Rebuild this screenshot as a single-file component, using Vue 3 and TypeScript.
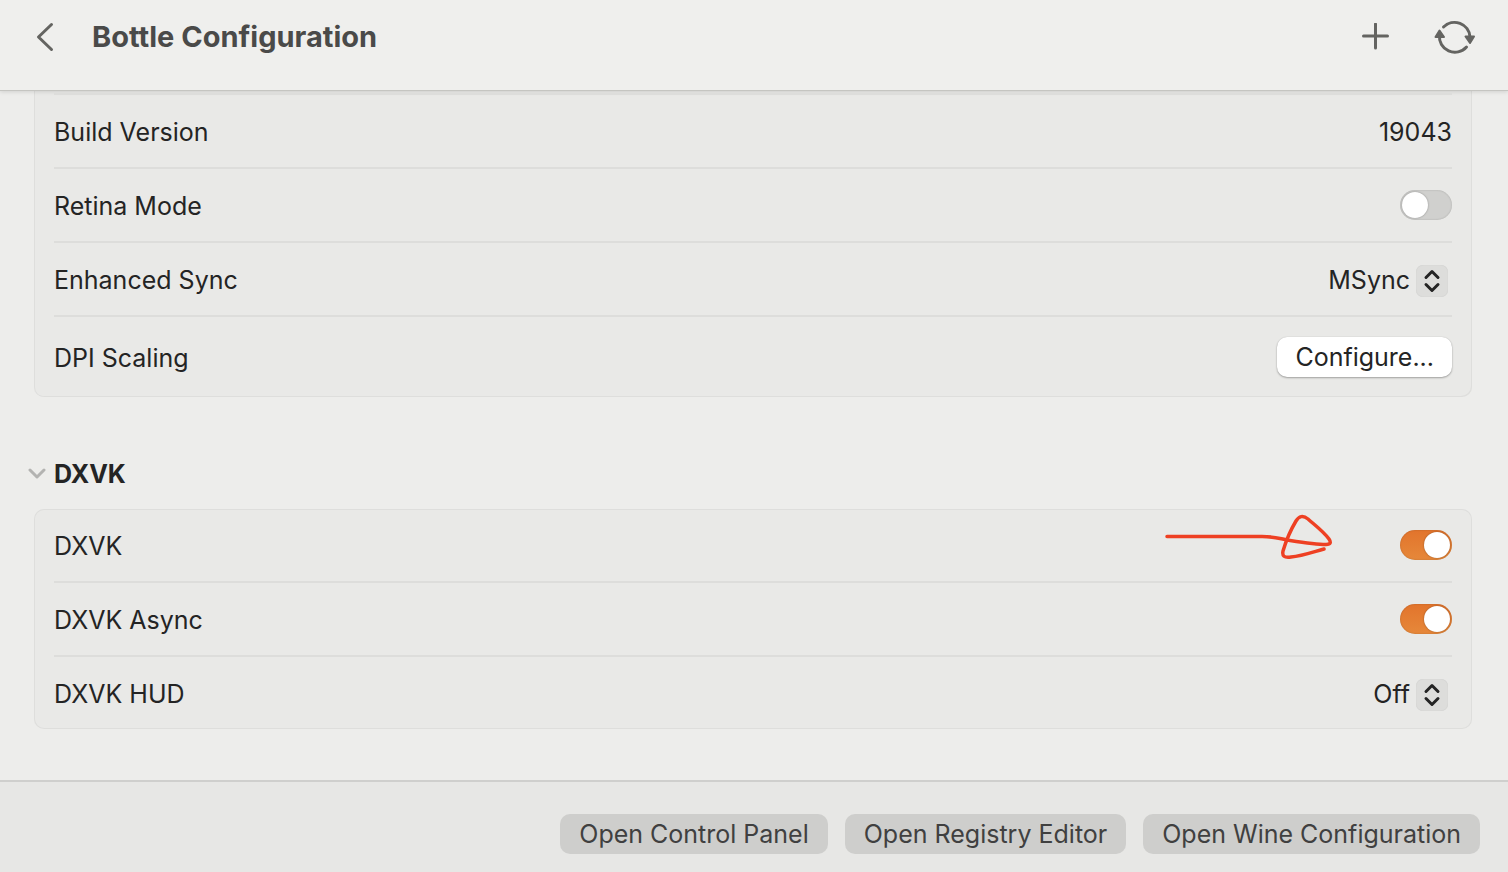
<script setup lang="ts">
import { ref } from 'vue'

const retina = ref(false)
const sync = ref('MSync')
const dxvk = ref(true)
const dxvkAsync = ref(true)
const hud = ref('Off')
const open = ref(true)
const actions: string[] = ['Open Control Panel', 'Open Registry Editor', 'Open Wine Configuration']
</script>

<template>
  <div class="window">
    <header class="toolbar">
      <button class="icon-button" aria-label="Back">
        <svg width="20" height="32" viewBox="0 0 20 32"><path d="M16.500 3.500 3.500 16 16.500 28.500" /></svg>
      </button>
      <h1>Bottle Configuration</h1>
      <button class="icon-button add" aria-label="Add">
        <svg width="28" height="28" viewBox="0 0 28 28"><path d="M13.500 1V25M1.500 13H25.500" /></svg>
      </button>
      <button class="icon-button" aria-label="Refresh">
        <svg width="42" height="36" viewBox="0 0 42 36">
          <path d="M9.500 8A15.500 15.500 0 0 1 36 18M32.500 28A15.500 15.500 0 0 1 5.500 16" />
          <path class="solid" d="M31.500 17.500H40L36 24ZM1.500 18H10L5.500 11.500Z" />
        </svg>
      </button>
    </header>

    <main>
      <section class="card continued">
        <div class="row">
          <span>Build Version</span>
          <span>19043</span>
        </div>
        <div class="row">
          <label for="retina">Retina Mode</label>
          <input id="retina" v-model="retina" class="switch" type="checkbox" />
        </div>
        <div class="row">
          <label for="sync">Enhanced Sync</label>
          <div class="picker">
            <select id="sync" v-model="sync">
              <option>None</option>
              <option>ESync</option>
              <option>MSync</option>
            </select>
            <svg width="32" height="32" viewBox="0 0 32 32"><path d="M10 12.500 16 6.500 22 12.500M10 19.500 16 25.500 22 19.500" /></svg>
          </div>
        </div>
        <div class="row tall">
          <span id="dpi">DPI Scaling</span>
          <button class="push" aria-describedby="dpi">Configure...</button>
        </div>
      </section>

      <h2>
        <button class="disclosure" :aria-expanded="open" @click="open = !open">
          <svg width="18" height="12" viewBox="0 0 18 12"><path d="M2 2 9 9 16 2" /></svg>
          DXVK
        </button>
      </h2>

      <section v-if="open" class="card">
        <div class="row">
          <label for="dxvk">DXVK</label>
          <svg class="arrow" width="170" height="50" viewBox="0 0 170 50" aria-hidden="true">
            <path d="M3 24.500H98C112 24.500 116 27 126 28.500C139 30.500 155 32.500 162 32.500C167 32.500 167 30 165 27C160 20 152 14 144 7C139 3 135 4 132 9C126 19 122 29 119 39C118 44 120 46 127 45C138 44 149 40 160 37" />
          </svg>
          <input id="dxvk" v-model="dxvk" class="switch" type="checkbox" />
        </div>
        <div class="row">
          <label for="async">DXVK Async</label>
          <input id="async" v-model="dxvkAsync" class="switch" type="checkbox" />
        </div>
        <div class="row">
          <label for="hud">DXVK HUD</label>
          <div class="picker">
            <select id="hud" v-model="hud">
              <option>Off</option>
              <option>FPS</option>
              <option>Partial</option>
              <option>Full</option>
            </select>
            <svg width="32" height="32" viewBox="0 0 32 32"><path d="M10 12.500 16 6.500 22 12.500M10 19.500 16 25.500 22 19.500" /></svg>
          </div>
        </div>
      </section>
    </main>

    <footer>
      <button v-for="action in actions" :key="action">{{ action }}</button>
    </footer>
  </div>
</template>

<style>
body {
  margin: 0;
}
</style>

<style scoped>
.window {
  display: flex;
  flex-direction: column;
  height: 100vh;
  overflow: hidden;
  background: #ededeb;
  color: #242424;
  font: 25px/32px Inter, "Liberation Sans", sans-serif;
}

* {
  box-sizing: border-box;
}

button,
select {
  border: 0;
  margin: 0;
  padding: 0;
  background: none;
  color: inherit;
  font: inherit;
}

svg {
  display: block;
  fill: none;
  stroke: currentColor;
  stroke-width: 3;
  stroke-linecap: round;
  stroke-linejoin: round;
}

.toolbar {
  position: relative;
  display: flex;
  flex: none;
  align-items: center;
  height: 91px;
  padding: 0 32px 16px 35px;
  border-bottom: 1px solid #c5c5c1;
  background: #efefed;
  box-shadow: 0 1px 4px rgba(0, 0, 0, 0.12);
  color: #646461;
}

h1 {
  flex: 1;
  margin: 0 0 0 37px;
  color: #4a4a49;
  font-size: 29px;
  font-weight: 700;
  line-height: 36px;
}

.add {
  margin-right: 44px;
}

.solid {
  fill: currentColor;
  stroke-width: 2;
}

main {
  flex: 1;
  min-height: 0;
  padding: 0 36px 0 34px;
  overflow: hidden;
}

.card {
  padding: 0 20px;
  border-radius: 10px;
  background: #e9e9e7;
  box-shadow: inset 0 0 0 1px #dededc;
}

.continued {
  padding-top: 2px;
  border-radius: 0 0 10px 10px;
  box-shadow: inset 1px 0 #dededc, inset -1px -1px #dededc;
}

.row {
  position: relative;
  display: flex;
  align-items: center;
  justify-content: space-between;
  min-height: 72px;
}

.row + .row,
.continued .row {
  min-height: 74px;
  border-top: 2px solid #dddddb;
}

.continued .row.tall {
  min-height: 82px;
}

.row > label,
.row > span {
  padding-top: 2px;
}

.switch {
  display: flex;
  align-items: center;
  width: 52px;
  height: 30px;
  margin: 0;
  padding: 2px;
  appearance: none;
  border-radius: 15px;
  background: #d0d0ce;
  box-shadow: inset 0 0 2px rgba(0, 0, 0, 0.2);
}

.switch::before {
  content: "";
  width: 26px;
  height: 26px;
  border-radius: 50%;
  background: #fff;
  box-shadow: 0 0 2px rgba(0, 0, 0, 0.35);
}

.switch:checked {
  justify-content: flex-end;
  background: linear-gradient(#e2742c, #e6883a);
}

.picker {
  position: relative;
  margin-right: 4px;
}

select {
  display: block;
  width: 160px;
  height: 32px;
  padding-top: 1px;
  padding-right: 38px;
  appearance: none;
  text-align-last: right;
}

.picker svg {
  position: absolute;
  top: 2px;
  right: 0;
  border-radius: 7px;
  background: #dddddb;
  box-shadow: inset 0 0 1px rgba(0, 0, 0, 0.15);
  pointer-events: none;
}

.push {
  height: 40px;
  padding: 0 18px;
  border-radius: 10px;
  background: #fff;
  box-shadow: 0 1px 2px rgba(0, 0, 0, 0.3), 0 0 1px rgba(0, 0, 0, 0.2);
}

h2 {
  margin: 0 0 0 -6px;
  padding: 61px 0 19px;
  font-size: 25px;
  line-height: 32px;
}

.disclosure {
  display: flex;
  gap: 8px;
  align-items: center;
  font-weight: 700;
}

.disclosure svg {
  color: #b3b3b1;
}

.arrow {
  position: absolute;
  top: 3px;
  right: 118px;
  color: #ee4023;
  stroke-width: 3.5;
}

footer {
  display: flex;
  flex: none;
  flex-wrap: wrap;
  gap: 17px;
  justify-content: flex-end;
  padding: 32px 28px 18px;
  border-top: 2px solid #cfcfcd;
  background: #e7e7e5;
  color: #404040;
}

footer button {
  height: 40px;
  padding: 0 19px;
  border-radius: 10px;
  background: #cececc;
}
</style>
